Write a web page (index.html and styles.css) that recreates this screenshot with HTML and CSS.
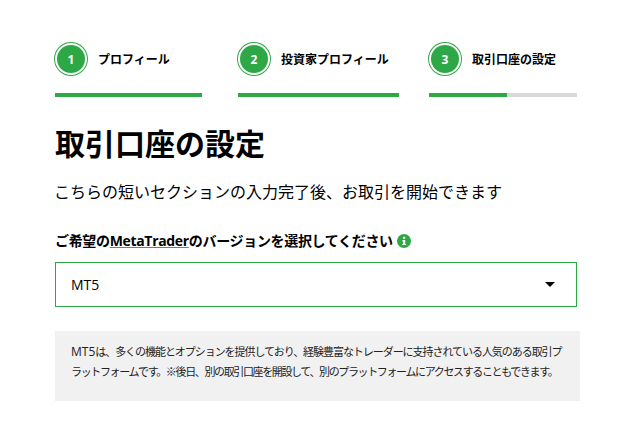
FILE: index.html
```html
<!DOCTYPE html>
<html lang="ja">
<head>
    <meta charset="UTF-8">
    <meta name="viewport" content="width=device-width, initial-scale=1.0">
    <title>取引口座の設定</title>
    <link rel="stylesheet" href="styles.css">
</head>
<body>
    <div class="steps">
        <div class="step step-one">
            <div class="step-head">
                <span class="step-num">1</span>
                <span class="step-name">プロフィール</span>
            </div>
            <div class="step-bar"><div class="step-fill"></div></div>
        </div>
        <div class="step step-two">
            <div class="step-head">
                <span class="step-num">2</span>
                <span class="step-name">投資家プロフィール</span>
            </div>
            <div class="step-bar"><div class="step-fill"></div></div>
        </div>
        <div class="step step-three">
            <div class="step-head">
                <span class="step-num">3</span>
                <span class="step-name">取引口座の設定</span>
            </div>
            <div class="step-bar"><div class="step-fill half"></div></div>
        </div>
    </div>

    <h1>取引口座の設定</h1>
    <p class="lead">こちらの短いセクションの入力完了後、お取引を開始できます</p>

    <div class="field-label">
        <span>ご希望の<a href="#">MetaTrader</a>のバージョンを選択してください</span>
        <svg class="info-icon" viewBox="0 0 14 14" width="14" height="14">
            <circle cx="7" cy="7" r="7" fill="#2ea846"/>
            <rect x="6" y="2.8" width="2.2" height="2" fill="#fff"/>
            <path d="M5.4 6h2.8v3.9h1v1.2H5.2V9.9h1V7.2h-.8z" fill="#fff"/>
        </svg>
    </div>

    <div class="select-box">
        <span>MT5</span>
        <span class="arrow"></span>
    </div>

    <div class="note"><span class="note-latin">MT5</span>は、多くの機能とオプションを提供しており、経験豊富なトレーダーに支持されている人気のある取引プ<br><span class="note-tight">ラットフォームです。※後日、別の取引口座を開設して、別のプラットフォームにアクセスすることもできます。</span></div>
</body>
</html>
```

FILE: styles.css
```css
body {
    font-family: "Open Sans", "Noto Sans CJK JP", sans-serif;
    margin: 0;
    padding: 42px 60px 0 55px;
    color: #000;
    background-color: #fff;
}
.steps {
    display: flex;
    gap: 36px;
    width: 522px;
}
.step-one {
    width: 147px;
}
.step-two {
    width: 161px;
    margin-right: -6px;
}
.step-three {
    width: 148px;
}
.step-head {
    display: flex;
    align-items: center;
    gap: 13px;
    height: 34px;
}
.step-num {
    display: flex;
    align-items: center;
    justify-content: center;
    flex-shrink: 0;
    width: 28px;
    height: 28px;
    margin-left: 2px;
    border-radius: 50%;
    background-color: #2ea846;
    box-shadow: 0 0 0 2px #fff, 0 0 0 3px #2ea846;
    color: #fff;
    font-size: 12px;
    font-weight: 700;
}
.step-name {
    font-size: 12px;
    font-weight: 700;
    white-space: nowrap;
}
.step-bar {
    height: 4px;
    margin-top: 17px;
    background-color: #d9d9d9;
}
.step-fill {
    height: 100%;
    background-color: #2ea846;
}
.step-fill.half {
    width: 53%;
}
h1 {
    margin: 29px 0 0;
    font-size: 30px;
    line-height: 36px;
    font-weight: 700;
}
.lead {
    margin: 18px 0 0 -1px;
    font-size: 16px;
    line-height: 24px;
}
.field-label {
    display: flex;
    align-items: center;
    margin-top: 27px;
    font-size: 14px;
    line-height: 20px;
    font-weight: 700;
    letter-spacing: -0.33px;
    white-space: nowrap;
}
.field-label a {
    color: #000;
    text-decoration: underline;
    text-decoration-color: #2ea846;
}
.info-icon {
    margin-left: 4px;
}
.select-box {
    display: flex;
    align-items: center;
    justify-content: space-between;
    box-sizing: border-box;
    width: 522px;
    height: 45px;
    margin-top: 11px;
    padding: 0 21px 0 15px;
    border: 1px solid #2ea846;
    font-size: 14px;
}
.arrow {
    width: 0;
    height: 0;
    border-left: 5px solid transparent;
    border-right: 5px solid transparent;
    border-top: 5px solid #000;
}
.note {
    box-sizing: border-box;
    width: 525px;
    height: 70px;
    margin-top: 24px;
    padding: 11px 16px;
    background-color: #f1f1f1;
    font-size: 11px;
    line-height: 20px;
    letter-spacing: -1.05px;
    white-space: nowrap;
    color: #222;
}
.note-latin {
    font-size: 12px;
    letter-spacing: 0;
}
.note-tight {
    letter-spacing: -1.37px;
}
```
